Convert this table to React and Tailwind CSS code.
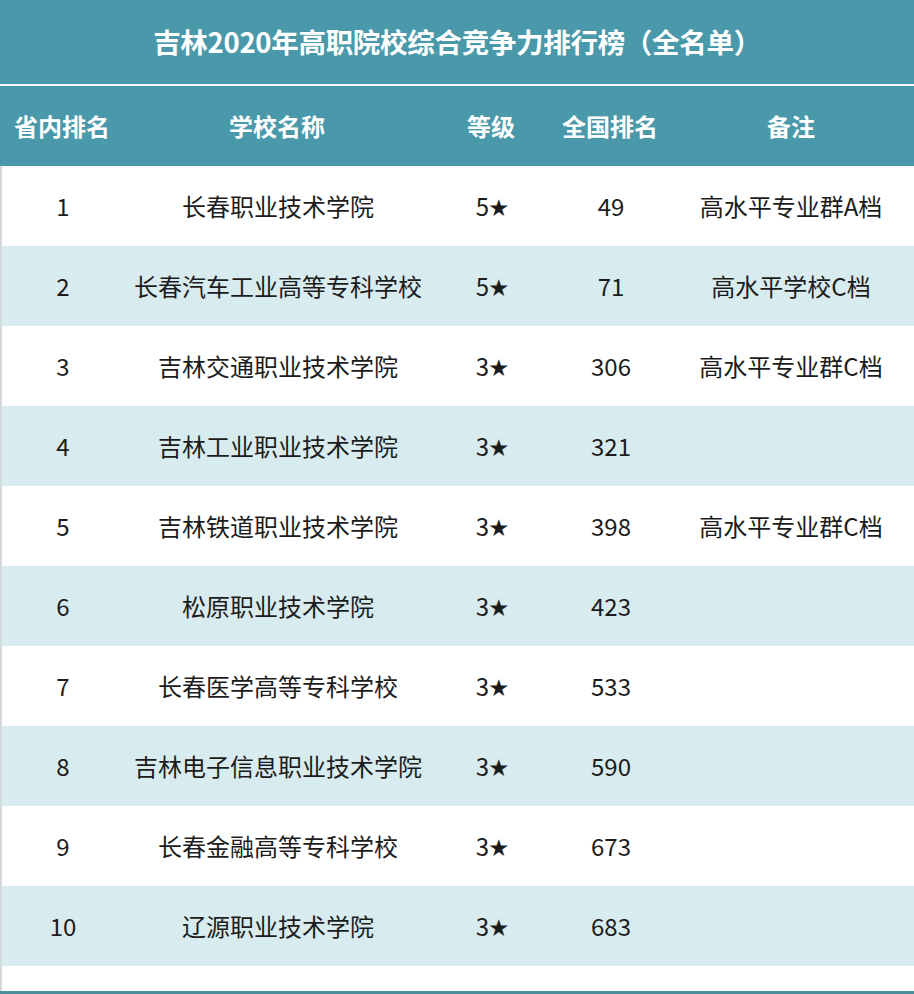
import React from "react";

const rows = [
  ["1", "长春职业技术学院", "5", "49", "高水平专业群A档"],
  ["2", "长春汽车工业高等专科学校", "5", "71", "高水平学校C档"],
  ["3", "吉林交通职业技术学院", "3", "306", "高水平专业群C档"],
  ["4", "吉林工业职业技术学院", "3", "321", ""],
  ["5", "吉林铁道职业技术学院", "3", "398", "高水平专业群C档"],
  ["6", "松原职业技术学院", "3", "423", ""],
  ["7", "长春医学高等专科学校", "3", "533", ""],
  ["8", "吉林电子信息职业技术学院", "3", "590", ""],
  ["9", "长春金融高等专科学校", "3", "673", ""],
  ["10", "辽源职业技术学院", "3", "683", ""],
];

const headers = ["省内排名", "学校名称", "等级", "全国排名", "备注"];

const cols = "grid grid-cols-[124px_306px_122px_116px_1fr]";

export default function App() {
  return (
    <div
      className="w-[914px] h-[994px] bg-white flex flex-col"
      style={{ fontFamily: '"Noto Sans CJK SC", "Noto Sans", sans-serif' }}
    >
      {/* Title */}
      <div className="h-[84px] bg-[#4a99aa] flex items-center justify-center">
        <h1 className="text-[27.5px] font-bold text-white tracking-[-0.3px]">
          吉林2020年高职院校综合竞争力排行榜（全名单）
        </h1>
      </div>
      <div className="h-[2px] bg-white" />

      {/* Header */}
      <div className={`${cols} h-[80px] bg-[#4a99aa] items-center`}>
        {headers.map((h) => (
          <div key={h} className="text-center text-[24px] font-bold text-white">
            {h}
          </div>
        ))}
      </div>

      {/* Body */}
      <div className="flex-1 flex flex-col border-l-2 border-[#d3dadc]">
        {rows.map((r, i) => (
          <div
            key={r[0]}
            className={`${cols} h-[80px] items-center ${
              i % 2 === 1 ? "bg-[#d8ebef]" : "bg-white"
            }`}
          >
            {r.map((c, j) => (
              <div key={j} className="text-center text-[24px] text-[#1c1c1c] -ml-[2px]">
                {c}
                {j === 2 && <span className="text-[19px] align-[1px]">★</span>}
              </div>
            ))}
          </div>
        ))}
        <div className="flex-1" />
      </div>
      <div className="h-[3px] bg-[#4a8f9c]" />
    </div>
  );
}
